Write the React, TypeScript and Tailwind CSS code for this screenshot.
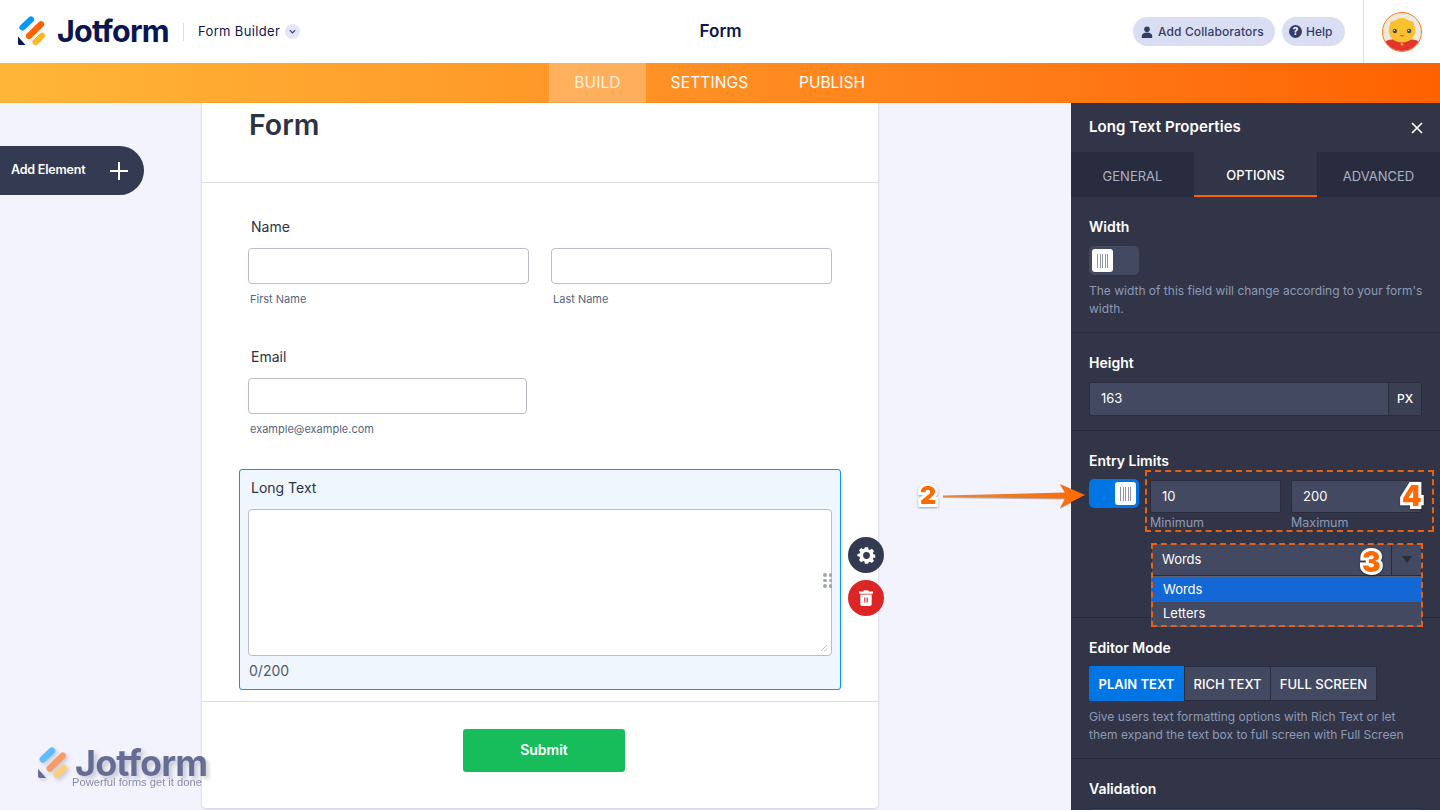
import React from "react";

function Logo({ className = "" }: { className?: string }) {
  return (
    <svg viewBox="0 0 28 30" className={className}>
      <line x1="4.5" y1="11.5" x2="13" y2="3.5" stroke="#0099ff" strokeWidth="6.2" strokeLinecap="round" />
      <line x1="11" y1="20" x2="23" y2="8.2" stroke="#ff6100" strokeWidth="6.2" strokeLinecap="round" />
      <line x1="17.5" y1="26" x2="24" y2="19.8" stroke="#ffb629" strokeWidth="6.2" strokeLinecap="round" />
      <path d="M0 20.5 L7.5 29 H1.5 A1.5 1.5 0 0 1 0 27.5 Z" fill="#0a1551" />
    </svg>
  );
}

function Knob({ on = false }: { on?: boolean }) {
  return (
    <div className={`w-[50px] h-[29px] rounded-[5px] flex items-center px-[3px] ${on ? "bg-[#0075e3] justify-end" : "bg-[#434960] justify-start"}`}>
      <div className="w-[21px] h-[23px] rounded-[3px] bg-white flex items-center justify-center gap-[1.5px]">
        {[0, 1, 2, 3, 4].map((i) => (
          <span key={i} className="w-px h-[14px] bg-[#8f94a8]" />
        ))}
      </div>
    </div>
  );
}

function Badge({ n, className }: { n: string; className: string }) {
  return (
    <span
      className={`absolute font-['Inter',sans-serif] font-black text-[#ff6a00] [-webkit-text-stroke:6px_#ffffff] [paint-order:stroke_fill] [filter:drop-shadow(0_1px_1px_rgba(0,0,0,0.35))] ${className}`}
    >
      {n}
    </span>
  );
}

function TextInput({ className = "" }: { className?: string }) {
  return <div className={`h-9 rounded-[4px] border border-[#b8bdc9] bg-white ${className}`} />;
}

export default function App() {
  return (
    <div className="relative w-[1440px] h-[810px] overflow-hidden flex flex-col bg-[#f3f3fe] font-['Inter',sans-serif]">
      {/* Header */}
      <header className="h-[63px] shrink-0 bg-white flex items-center">
        <div className="w-[183px] pl-[18px] flex items-center">
          <Logo className="w-[28px] h-[30px] -mt-[1px] shrink-0" />
          <span className="ml-[11px] text-[30.5px] leading-none font-bold tracking-[-0.8px] text-[#0a1551]">Jotform</span>
        </div>
        <div className="w-px h-[18px] bg-[#dadef3]" />
        <span className="ml-[14px] text-[13px] text-[#0a1551] tracking-[0.35px]">Form Builder</span>
        <span className="ml-[5px] w-[15px] h-[15px] rounded-full bg-[#e3e5f5] flex items-center justify-center">
          <svg viewBox="0 0 10 10" className="w-[9px] h-[9px]" fill="none" stroke="#343c6a" strokeWidth="1.3">
            <path d="M2 3.5 L5 6.5 L8 3.5" />
          </svg>
        </span>
        <div className="flex-1 flex justify-center">
          <span className="text-[17px] font-semibold text-[#0a1551] ml-[8px]">Form</span>
        </div>
        <div className="flex items-center gap-[7px] pr-[18px] h-full">
          <div className="h-[29px] w-[142px] rounded-full bg-[#dadef3] flex items-center pl-[8px] gap-[5px]">
            <svg viewBox="0 0 12 12" className="w-[12px] h-[12px]" fill="#343c6a">
              <circle cx="6" cy="3.2" r="2.8" />
              <path d="M0.8 12 V10 C0.8 7.8 3 6.6 6 6.6 C9 6.6 11.2 7.8 11.2 10 V12 Z" />
            </svg>
            <span className="text-[12px] text-[#343c6a] tracking-[0.12px] font-medium">Add Collaborators</span>
          </div>
          <div className="h-[29px] w-[63px] rounded-full bg-[#dadef3] flex items-center pl-[7px] gap-[4px]">
            <span className="w-[13px] h-[13px] rounded-full bg-[#343c6a] text-white text-[10px] font-bold leading-[13px] text-center">?</span>
            <span className="text-[12px] font-medium text-[#343c6a]">Help</span>
          </div>
          <div className="w-px h-full bg-[#dadef3] ml-[11px]" />
          <div className="ml-[11px] w-[40px] h-[40px] rounded-full border border-[#ff7a1a] bg-[#eeeadd] overflow-hidden">
            <svg viewBox="0 0 40 40" className="w-full h-full">
              <path d="M2 40 V30 C8 26 32 26 38 30 V40 Z" fill="#e2352b" />
              <path d="M8 9 L13 8 L16 6 C18 5 22 5 24 6 L27 8 L32 9 L34 18 C34 26 28 31 20 31 C12 31 6 26 6 18 Z" fill="#fbc02d" />
              <circle cx="12.5" cy="19" r="2.3" fill="#4a4a4a" />
              <circle cx="27.5" cy="19" r="2.3" fill="#4a4a4a" />
              <circle cx="12" cy="18.3" r="0.7" fill="#fff" />
              <circle cx="27" cy="18.3" r="0.7" fill="#fff" />
              <path d="M17.5 23.5 Q20 26 22.5 23.5" fill="#c8502a" />
              <circle cx="20" cy="33" r="1.4" fill="#f4b03e" />
            </svg>
          </div>
        </div>
      </header>

      {/* Orange nav */}
      <nav className="h-10 shrink-0 flex justify-center bg-gradient-to-r from-[#ffb638] to-[#ff6100] text-[15.5px] text-white">
        <div className="w-[97px] bg-white/25 flex items-center justify-center text-[#fff2dd] ml-[-1px] pl-[1px] tracking-[0.1px]">BUILD</div>
        <div className="w-[127px] flex items-center justify-center pl-[1px] tracking-[0.15px]">SETTINGS</div>
        <div className="w-[118px] flex items-center justify-center pl-[1px]">PUBLISH</div>
      </nav>

      {/* Body */}
      <div className="flex-1 min-h-0 flex">
        {/* Canvas */}
        <main className="flex-1 min-w-0 pl-[202px]">
          <div className="w-[676px] h-[705px] bg-white rounded-b-[4px] shadow-[0_1px_3px_rgba(10,21,81,0.18)] flex flex-col">
            <div className="h-[80px] shrink-0 border-b border-[#d9dbe3] pl-[47px] pt-[3px]">
              <h1 className="text-[28.5px] leading-[38px] font-semibold text-[#2c3345]">Form</h1>
            </div>

            <div className="pl-[46px] pr-[46px] pt-[35px]">
              <div className="pl-[3px] text-[14px] leading-[17px] text-[#2c3345]">Name</div>
              <div className="flex gap-[22px] mt-[13px]">
                <div className="w-[281px]">
                  <TextInput />
                  <div className="pl-[2px] mt-[8px] text-[11px] leading-[14px] text-[#57647e]">First Name</div>
                </div>
                <div className="w-[281px]">
                  <TextInput />
                  <div className="pl-[2px] mt-[8px] text-[11px] leading-[14px] text-[#57647e]">Last Name</div>
                </div>
              </div>
              <div className="pl-[3px] mt-[42px] text-[14px] leading-[17px] text-[#2c3345]">Email</div>
              <div className="w-[279px] mt-[13px]">
                <TextInput />
                <div className="pl-[2px] mt-[8px] text-[11px] leading-[14px] text-[#57647e] whitespace-nowrap">example@example.com</div>
              </div>
            </div>

            <div className="ml-[37px] mt-[33px] w-[602px] h-[221px] shrink-0 rounded-[3px] border border-[#0099ff] bg-[#eff6fe] px-[8px] pt-[9px]">
              <div className="pl-[3px] text-[14px] leading-[17px] text-[#2c3345]">Long Text</div>
              <div className="relative mt-[13px] h-[147px] rounded-[4px] border border-[#b8bdc9] bg-white">
                <svg viewBox="0 0 8 8" className="absolute right-[3px] bottom-[3px] w-[8px] h-[8px]" stroke="#a5a9b5" strokeWidth="0.8">
                  <path d="M1 7 L7 1 M4.5 7 L7 4.5" />
                </svg>
              </div>
              <div className="mt-[6px] pl-px text-[14px] leading-[17px] text-[#4f5a70]">0/200</div>
            </div>

            <div className="mt-[11px] border-t border-[#d9dbe3] flex justify-center pt-[27px]">
              <button className="ml-[8px] w-[162px] h-[43px] pb-[2px] rounded-[3px] bg-[#18bd5b] text-white text-[14px] font-semibold">Submit</button>
            </div>
          </div>
        </main>

        {/* Right panel */}
        <aside className="w-[369px] shrink-0 bg-[#323548] text-white flex flex-col">
          <div className="h-[49px] shrink-0 flex items-center justify-between pl-[18px] pr-[17px]">
            <span className="text-[15px] font-semibold tracking-[0.08px]">Long Text Properties</span>
            <svg viewBox="0 0 12 12" className="w-[12px] h-[12px]" stroke="#fff" strokeWidth="1.7">
              <path d="M1 1 L11 11 M11 1 L1 11" />
            </svg>
          </div>
          <div className="h-[45px] shrink-0 bg-[#292c3e] flex text-[13px]">
            <div className="w-[123px] flex items-center justify-center text-[#a9b2c9] pt-[5px]">GENERAL</div>
            <div className="w-[123px] flex items-center justify-center bg-[#323548] border-b-2 border-[#ff6100] font-medium pt-[5px]">OPTIONS</div>
            <div className="w-[123px] flex items-center justify-center text-[#a9b2c9] pt-[5px]">ADVANCED</div>
          </div>

          <section className="h-[136px] shrink-0 border-b border-[#272a3b] pl-[18px] pr-[16px] pt-[21px]">
            <div className="text-[14px] leading-[17px] font-semibold">Width</div>
            <div className="mt-[11px]"><Knob /></div>
            <p className="mt-[7px] text-[12px] leading-[18px] text-[#8d9ab5]">The width of this field will change according to your form's width.</p>
          </section>

          <section className="h-[98px] shrink-0 border-b border-[#272a3b] pl-[18px] pr-[18px] pt-[21px]">
            <div className="text-[14px] leading-[17px] font-semibold">Height</div>
            <div className="mt-[11px] h-[34px] flex rounded-[2px] border border-[#292c3e] bg-[#434960] text-[13px]">
              <div className="flex-1 pl-[11px] flex items-center">163</div>
              <div className="w-[33px] flex items-center justify-center border-l border-[#292c3e] bg-[#3a3f54] font-medium text-[12px]">PX</div>
            </div>
          </section>

          <section className="h-[187px] shrink-0 border-b border-[#272a3b] pl-[18px] pr-[18px] pt-[21px]">
            <div className="text-[14px] leading-[17px] font-semibold">Entry Limits</div>
            <div className="mt-[10px] flex">
              <Knob on />
              <div className="ml-[11px] mt-[1px] flex gap-[10px]">
                <div className="w-[131px]">
                  <div className="h-[33px] rounded-[2px] border border-[#292c3e] bg-[#434960] pl-[11px] flex items-center text-[13px]">10</div>
                  <div className="text-[12.5px] leading-[15px] mt-[2px] text-[#8d9ab5]">Minimum</div>
                </div>
                <div className="w-[131px]">
                  <div className="h-[33px] rounded-[2px] border border-[#292c3e] bg-[#434960] pl-[11px] flex items-center text-[13px]">200</div>
                  <div className="text-[12.5px] leading-[15px] mt-[2px] text-[#8d9ab5]">Maximum</div>
                </div>
              </div>
            </div>
            <div className="ml-[62px] mt-[13px] w-[271px]">
              <div className="h-[33px] flex bg-[#434960] border border-[#292c3e] text-[13px]">
                <div className="flex-1 pl-[10px] flex items-center">Words</div>
                <div className="w-[30px] border-l border-[#292c3e] flex items-center justify-center">
                  <span className="w-0 h-0 border-x-[5px] border-x-transparent border-t-[7px] border-t-[#292c3e]" />
                </div>
              </div>
              <div className="h-[51px] bg-[#434960] border border-[#5a5f72] text-[13px] flex flex-col">
                <div className="h-[25px] bg-[#1468d6] pl-[11px] flex items-center">Words</div>
                <div className="h-[24px] pl-[11px] flex items-center">Letters</div>
              </div>
            </div>
          </section>

          <section className="h-[141px] shrink-0 border-b border-[#272a3b] pl-[18px] pr-[16px] pt-[21px]">
            <div className="text-[14px] leading-[17px] font-semibold">Editor Mode</div>
            <div className="mt-[10px] flex h-[35px] text-[13px] font-medium">
              <div className="w-[95px] bg-[#0075e3] flex items-center justify-center font-semibold rounded-l-[2px] pt-[3px]">PLAIN TEXT</div>
              <div className="w-[87px] bg-[#434960] border border-[#292c3e] flex items-center justify-center pt-[3px]">RICH TEXT</div>
              <div className="w-[106px] bg-[#434960] border border-l-0 border-[#292c3e] flex items-center justify-center pt-[3px]">FULL SCREEN</div>
            </div>
            <p className="mt-[7px] text-[12px] leading-[18px] text-[#8d9ab5]">Give users text formatting options with Rich Text or let them expand the text box to full screen with Full Screen</p>
          </section>

          <section className="pl-[18px] pr-[18px] pt-[21px]">
            <div className="text-[14px] leading-[17px] font-semibold">Validation</div>
            <div className="mt-[11px] h-[34px] rounded-[2px] border border-[#292c3e] bg-[#434960]" />
          </section>
        </aside>
      </div>

      {/* Add Element floating pill */}
      <div className="absolute left-0 top-[146px] w-[144px] h-[49px] rounded-r-full bg-[#343a52] flex items-center pl-[11px] text-white">
        <span className="text-[12.5px] font-semibold tracking-[-0.2px]">Add Element</span>
        <svg viewBox="0 0 18 18" className="ml-[25px] w-[18px] h-[18px]" stroke="#fff" strokeWidth="2">
          <path d="M9 0 V18 M0 9 H18" />
        </svg>
      </div>

      {/* Question drag handle and action buttons */}
      <div className="absolute left-[823px] top-[573px] grid grid-cols-2 gap-[2px]">
        {[0, 1, 2, 3, 4, 5].map((i) => (
          <span key={i} className="w-[3.5px] h-[3.5px] rounded-full bg-[#a0a5b3]" />
        ))}
      </div>
      <div className="absolute left-[848px] top-[537px] w-9 h-9 rounded-full bg-[#343a52] flex items-center justify-center">
        <svg viewBox="0 0 24 24" className="w-[19px] h-[19px]" fill="#fff">
          <path fillRule="evenodd" d="M10 2h4l.6 2.8 1.7.7 2.4-1.5 2.8 2.8-1.5 2.4.7 1.7L23 11.5v4l-2.3-.4-.7 1.7 1.5 2.4-2.8 2.8-2.4-1.5-1.7.7L14 23h-4l-.6-2.8-1.7-.7-2.4 1.5-2.8-2.8 1.5-2.4-.7-1.7L.5 13.5v-3l2.8-.6.7-1.7L2.5 5.8l2.8-2.8 2.4 1.5 1.7-.7zM12 8.2a4.3 4.3 0 1 0 0 8.6 4.3 4.3 0 0 0 0-8.6z" transform="translate(0 -0.5)" />
        </svg>
      </div>
      <div className="absolute left-[848px] top-[580px] w-9 h-9 rounded-full bg-[#dc2626] flex items-center justify-center">
        <svg viewBox="0 0 16 18" className="w-[14px] h-[16px]" fill="#fff">
          <path d="M5.5 0h5l.6 1.5H16V4H0V1.5h4.9z" />
          <path fillRule="evenodd" d="M1.5 5h13v11a2 2 0 0 1-2 2h-9a2 2 0 0 1-2-2zM6 8.5v5.5h1.3V8.5zm2.7 0v5.5H10V8.5z" />
        </svg>
      </div>

      {/* Annotation overlay */}
      <svg viewBox="0 0 160 30" className="absolute left-[940px] top-[481px] w-[160px] h-[30px]">
        <defs>
          <linearGradient id="arrow" x1="0" x2="1" y1="0" y2="0">
            <stop offset="0" stopColor="#e08a45" />
            <stop offset="1" stopColor="#ff6a00" />
          </linearGradient>
        </defs>
        <path d="M3 15.6 L125 12.2 L120 4 L145 15 L120 28 L125 18.5 L3 17 Z" fill="#000" opacity="0.25" />
        <path d="M3 14.6 L125 11.5 L120 3 L145 14 L120 27 L125 17.5 L3 16 Z" fill="url(#arrow)" />
      </svg>
      <Badge n="2" className="left-[920px] top-[479px] text-[25px] leading-[32px]" />
      <Badge n="3" className="left-[1362px] top-[545px] text-[28px] leading-[34px]" />
      <Badge n="4" className="left-[1402px] top-[479px] text-[28px] leading-[34px]" />
      <div className="absolute left-[1145px] top-[470px] w-[289px] h-[62px] border-2 border-dashed border-[#e8610f]" />
      <div className="absolute left-[1151px] top-[543px] w-[272px] h-[84px] border-2 border-dashed border-[#e8610f]" />

      {/* Watermark */}
      <div className="absolute left-[38px] top-[751px] opacity-60 pointer-events-none">
        <div className="flex items-center h-[24px]">
          <Logo className="w-[30px] h-[32px] shrink-0 [filter:drop-shadow(2px_2px_2px_rgba(0,0,0,0.3))]" />
          <span className="ml-[7px] text-[36px] leading-[24px] font-bold tracking-[-0.9px] text-[#0a1551] [text-shadow:3px_3px_4px_rgba(0,0,0,0.3)]">Jotform</span>
        </div>
        <div className="ml-[34px] mt-[1px] text-[11.2px] leading-[13px] font-['Liberation_Sans',sans-serif] text-[#3b4470] whitespace-nowrap">Powerful forms get it done</div>
      </div>
    </div>
  );
}
